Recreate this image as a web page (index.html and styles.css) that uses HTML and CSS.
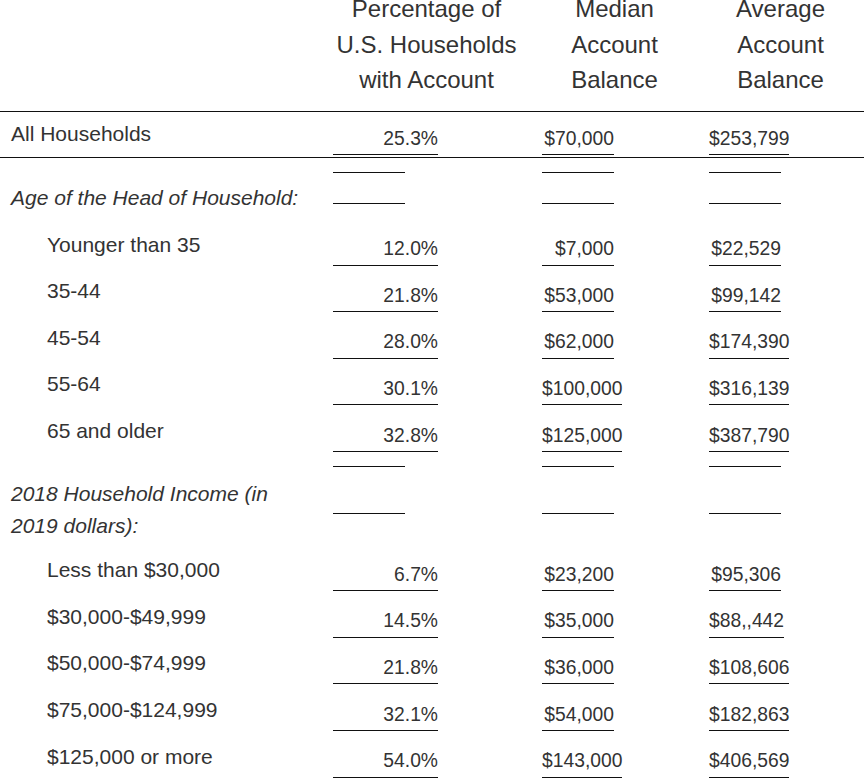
FILE: index.html
```html
<!DOCTYPE html>
<html lang="en">
<head>
<meta charset="utf-8">
<title>Households with Account</title>
<link rel="stylesheet" href="styles.css">
</head>
<body>
<div class="sheet">
  <div class="row head">
    <div class="c0"></div>
    <div class="c1"><div class="hd hd1">Percentage of<br>U.S. Households<br>with Account</div></div>
    <div class="c2"><div class="hd hd2">Median<br>Account<br>Balance</div></div>
    <div class="c3"><div class="hd hd3">Average<br>Account<br>Balance</div></div>
  </div>

  <div class="row total">
    <div class="lbl">All Households</div>
    <div class="c1"><div class="v v1">25.3%</div></div>
    <div class="c2"><div class="v">$70,000</div></div>
    <div class="c3"><div class="v">$253,799</div></div>
  </div>

  <div class="row section age">
    <div class="lbl sec">Age of the Head of Household:</div>
    <div class="c1"><div class="blank b1"></div><div class="blank b2"></div></div>
    <div class="c2"><div class="blank b1"></div><div class="blank b2"></div></div>
    <div class="c3"><div class="blank b1"></div><div class="blank b2"></div></div>
  </div>

  <div class="row item">
    <div class="lbl">Younger than 35</div>
    <div class="c1"><div class="v v1">12.0%</div></div>
    <div class="c2"><div class="v">$7,000</div></div>
    <div class="c3"><div class="v">$22,529</div></div>
  </div>
  <div class="row item">
    <div class="lbl">35-44</div>
    <div class="c1"><div class="v v1">21.8%</div></div>
    <div class="c2"><div class="v">$53,000</div></div>
    <div class="c3"><div class="v">$99,142</div></div>
  </div>
  <div class="row item">
    <div class="lbl">45-54</div>
    <div class="c1"><div class="v v1">28.0%</div></div>
    <div class="c2"><div class="v">$62,000</div></div>
    <div class="c3"><div class="v">$174,390</div></div>
  </div>
  <div class="row item">
    <div class="lbl">55-64</div>
    <div class="c1"><div class="v v1">30.1%</div></div>
    <div class="c2"><div class="v">$100,000</div></div>
    <div class="c3"><div class="v">$316,139</div></div>
  </div>
  <div class="row item">
    <div class="lbl">65 and older</div>
    <div class="c1"><div class="v v1">32.8%</div></div>
    <div class="c2"><div class="v">$125,000</div></div>
    <div class="c3"><div class="v">$387,790</div></div>
  </div>

  <div class="row section income">
    <div class="lbl sec">2018 Household Income (in<br>2019 dollars):</div>
    <div class="c1"><div class="blank b1"></div><div class="blank b2"></div></div>
    <div class="c2"><div class="blank b1"></div><div class="blank b2"></div></div>
    <div class="c3"><div class="blank b1"></div><div class="blank b2"></div></div>
  </div>

  <div class="row item">
    <div class="lbl">Less than $30,000</div>
    <div class="c1"><div class="v v1">6.7%</div></div>
    <div class="c2"><div class="v">$23,200</div></div>
    <div class="c3"><div class="v">$95,306</div></div>
  </div>
  <div class="row item">
    <div class="lbl">$30,000-$49,999</div>
    <div class="c1"><div class="v v1">14.5%</div></div>
    <div class="c2"><div class="v">$35,000</div></div>
    <div class="c3"><div class="v">$88,,442</div></div>
  </div>
  <div class="row item">
    <div class="lbl">$50,000-$74,999</div>
    <div class="c1"><div class="v v1">21.8%</div></div>
    <div class="c2"><div class="v">$36,000</div></div>
    <div class="c3"><div class="v">$108,606</div></div>
  </div>
  <div class="row item">
    <div class="lbl">$75,000-$124,999</div>
    <div class="c1"><div class="v v1">32.1%</div></div>
    <div class="c2"><div class="v">$54,000</div></div>
    <div class="c3"><div class="v">$182,863</div></div>
  </div>
  <div class="row item">
    <div class="lbl">$125,000 or more</div>
    <div class="c1"><div class="v v1">54.0%</div></div>
    <div class="c2"><div class="v">$143,000</div></div>
    <div class="c3"><div class="v">$406,569</div></div>
  </div>
</div>
</body>
</html>
```

FILE: styles.css
```css
html, body {
  margin: 0;
  padding: 0;
  background: #ffffff;
}

body {
  font-family: "Liberation Sans", Arial, sans-serif;
  color: #333333;
  overflow: hidden;
}

.sheet {
  width: 864px;
}

.row {
  display: grid;
  grid-template-columns: 333px 209px 167px 1fr;
}

/* header (page is scrolled slightly, so the first line is cut at the top) */
.head {
  margin-top: -8.9px;
  padding-bottom: 13.5px;
  border-bottom: 1px solid #111111;
  align-items: start;
}

.hd {
  font-size: 24px;
  line-height: 35.5px;
  text-align: center;
}

.hd1 { width: 187px; }
.hd2 { width: 145px; }
.hd3 { width: 143px; }

/* labels */
.lbl {
  font-size: 21px;
  line-height: 31.5px;
  padding-left: 11px;
  white-space: nowrap;
}

/* values */
.v {
  font-size: 19.3px;
  line-height: 31.4px;
  border-bottom: 1px solid #111111;
  text-align: right;
  min-width: 72px;
  width: fit-content;
  white-space: nowrap;
}

.v1 {
  width: 105px;
}

/* all households row */
.total {
  height: 45px;
  border-bottom: 1px solid #111111;
  align-items: end;
}

.total .lbl {
  padding-bottom: 7.8px;
}

.total .v {
  margin-bottom: 2px;
}

/* section heading rows */
.section {
  align-items: start;
}

.sec {
  font-style: italic;
}

.age {
  height: 61px;
}

.age .sec {
  padding-top: 23.5px;
}

.income {
  height: 92.5px;
}

.income .sec {
  padding-top: 26px;
}

.blank {
  width: 72px;
  border-bottom: 1px solid #111111;
}

.b1 { height: 14px; }
.b2 { height: 30px; }
.income .b2 { height: 46px; }

/* item rows */
.item {
  height: 46.6px;
  align-items: end;
}

.item .lbl {
  padding-left: 47px;
  padding-bottom: 5.5px;
}
```
